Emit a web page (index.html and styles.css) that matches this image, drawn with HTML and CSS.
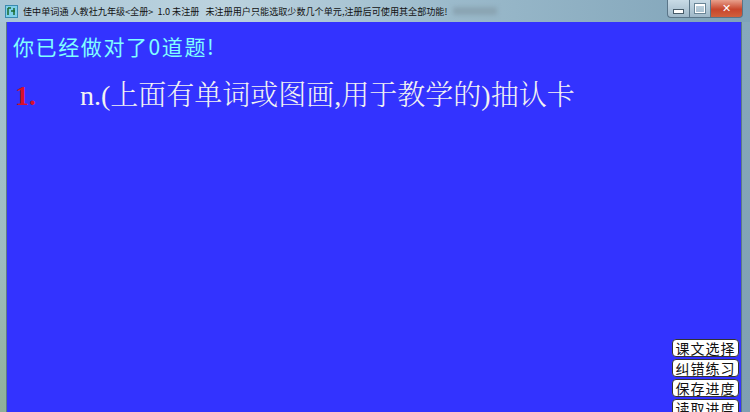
FILE: index.html
```html
<!DOCTYPE html>
<html lang="zh">
<head>
<meta charset="utf-8">
<link rel="stylesheet" href="styles.css">
</head>
<body>
<div class="window">
  <div class="titlebar">
    <svg class="appicon" width="13" height="13" viewBox="0 0 13 13">
      <rect x="0.5" y="0.5" width="12" height="12" fill="#7fd0e8" stroke="#3a8ab0"/>
      <path d="M3 3v7M3 3h3M9 3v7M6 6h4" stroke="#1a6a30" stroke-width="1.5" fill="none"/>
    </svg>
    <span class="title">佳中单词通 人教社九年级&lt;全册&gt;  1.0 未注册   未注册用户只能选取少数几个单元,注册后可使用其全部功能!</span>
    <span class="blur"></span>
    <div class="controls">
      <span class="ctl min"><span class="minbar"></span></span>
      <span class="ctl max"><span class="maxbox"></span></span>
      <span class="ctl close">✕</span>
    </div>
  </div>
  <div class="body">
    <div class="frame-l"></div>
    <div class="client">
      <div class="score">你已经做对了0道题!</div>
      <div class="question">
        <span class="num">1.</span>
        <span class="qtext">n.(上面有单词或图画,用于教学的)抽认卡</span>
      </div>
      <div class="buttons">
        <button class="btn">课文选择</button>
        <button class="btn">纠错练习</button>
        <button class="btn">保存进度</button>
        <button class="btn">读取进度</button>
      </div>
    </div>
    <div class="frame-r"></div>
  </div>
</div>
</body>
</html>
```

FILE: styles.css
```css
html, body {
  margin: 0;
  padding: 0;
  width: 750px;
  height: 412px;
  overflow: hidden;
  background: #9ab8c8;
}
.window {
  width: 750px;
  height: 412px;
  display: flex;
  flex-direction: column;
  background: linear-gradient(90deg, #a9c6d6 0%, #bcd3df 30%, #9bbacb 60%, #7fa3b8 100%);
}
.titlebar {
  height: 22px;
  display: flex;
  align-items: center;
  position: relative;
  font-family: "Noto Sans CJK SC", "Liberation Sans", sans-serif;
  font-size: 9.1px;
  color: #111;
  flex-shrink: 0;
}
.appicon {
  margin-left: 5px;
  margin-right: 5px;
}
.title {
  white-space: pre;
}
.blur {
  display: inline-block;
  width: 44px;
  height: 8px;
  margin-left: 6px;
  background: #8aa4b2;
  filter: blur(2px);
}
.controls {
  position: absolute;
  right: 7px;
  top: 0;
  display: flex;
  height: 19px;
}
.ctl {
  display: flex;
  align-items: center;
  justify-content: center;
  height: 18px;
  border: 1px solid #5a7588;
  border-top: none;
  box-sizing: border-box;
}
.min {
  width: 22px;
  border-radius: 0 0 0 4px;
  background: linear-gradient(#c9dbe6, #9fb8c8);
  border-right: none;
}
.max {
  width: 21px;
  background: linear-gradient(#c9dbe6, #9fb8c8);
  border-right: none;
}
.close {
  width: 33px;
  border-radius: 0 0 4px 0;
  background: linear-gradient(#e8a08c, #c8462c 55%, #d0603c);
  color: #fff;
  font-size: 11px;
  font-weight: bold;
  font-family: "DejaVu Sans", sans-serif;
}
.minbar {
  width: 9px;
  height: 3px;
  background: #fff;
  border: 1px solid #465a68;
  margin-top: 5px;
}
.maxbox {
  width: 8px;
  height: 6px;
  border: 1px solid #fff;
  border-top-width: 2px;
  outline: 1px solid #6a8596;
}
.body {
  flex: 1;
  display: flex;
  min-height: 0;
}
.frame-l {
  width: 7px;
  flex-shrink: 0;
  background: linear-gradient(#a8c4d2, #9dbcc0 60%, #8fb098);
  box-shadow: inset -1px 0 0 #5d7a88;
}
.frame-r {
  width: 9px;
  flex-shrink: 0;
  background: linear-gradient(#86a8bc, #7e9fb2);
  box-shadow: inset 1px 0 0 #5d7a88;
}
.client {
  flex: 1;
  background: #3333ff;
  position: relative;
  display: flex;
  flex-direction: column;
}
.score {
  margin: 11px 0 0 6px;
  color: #80ffff;
  font-family: "Noto Sans CJK SC", "Liberation Serif", serif;
  font-size: 21px;
  line-height: 26px;
  letter-spacing: 1.6px;
}
.question {
  display: flex;
  align-items: baseline;
  margin: 20px 0 0 8px;
  font-family: "Liberation Serif", "Noto Sans CJK SC", serif;
  font-size: 28px;
  line-height: 34px;
}
.num {
  color: #d8102c;
  width: 65px;
  font-weight: bold;
}
.qtext {
  color: #f2f2f2;
  font-family: "Liberation Serif", "Noto Serif CJK SC", "Noto Sans CJK SC", serif;
  font-weight: 300;
}
.buttons {
  position: absolute;
  right: 2px;
  top: 317px;
  display: flex;
  flex-direction: column;
  gap: 2px;
}
.btn {
  width: 67px;
  height: 18px;
  padding: 0;
  margin: 0;
  background: #fff;
  border: 1px solid #333;
  border-radius: 4px;
  font-family: "Noto Sans CJK SC", sans-serif;
  font-size: 14px;
  line-height: 16px;
  color: #111;
  letter-spacing: 1px;
}
```
